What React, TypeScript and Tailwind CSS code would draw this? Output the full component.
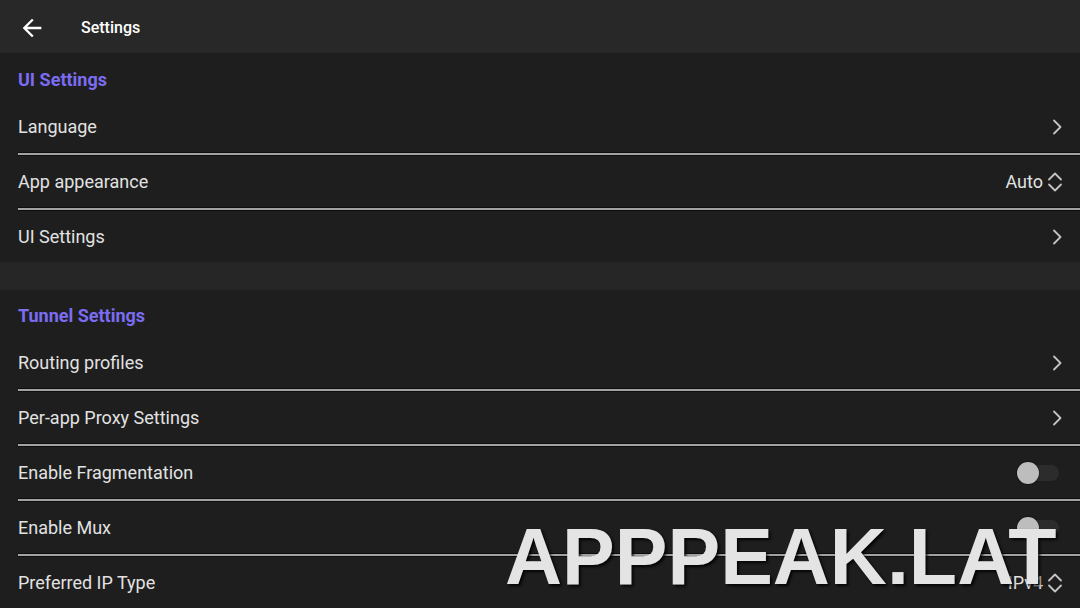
import React from "react";

const font = { fontFamily: "Roboto, 'Noto Sans', sans-serif" };

function ChevronRight() {
  return (
    <svg width="12" height="16" viewBox="0 0 12 16" className="block">
      <polyline points="3,1.5 9.5,8 3,14.5" fill="none" stroke="#c4c4c4" strokeWidth="1.8" strokeLinecap="round" strokeLinejoin="round" />
    </svg>
  );
}

function UpDown() {
  return (
    <svg width="16" height="22" viewBox="0 0 16 22" className="block">
      <polyline points="2,8.5 8,2.5 14,8.5" fill="none" stroke="#c4c4c4" strokeWidth="1.8" strokeLinecap="round" strokeLinejoin="round" />
      <polyline points="2,13.5 8,19.5 14,13.5" fill="none" stroke="#c4c4c4" strokeWidth="1.8" strokeLinecap="round" strokeLinejoin="round" />
    </svg>
  );
}

function Toggle() {
  return (
    <div className="relative w-[42px] h-[22px] flex items-center">
      <div className="absolute left-[12px] right-0 h-[16px] rounded-full bg-[#2c2c2c]" />
      <div className="absolute left-0 w-[22px] h-[22px] rounded-full bg-[#bdbdbd] shadow-[0_0_2px_rgba(0,0,0,0.9)]" />
    </div>
  );
}

function Divider() {
  return <div className="ml-[18px] h-[4px] border-y border-[#0e0e0e] bg-[#a2a2a2]" />;
}

type Row = { label: string; kind: "link" | "select" | "toggle"; value?: string };

function SettingRow({ row }: { row: Row }) {
  return (
    <div className="h-[51px] flex items-center justify-between pl-[18px] pr-[17px]">
      <span className="text-[18px] text-[#e2e2e2]">{row.label}</span>
      {row.kind === "link" && <ChevronRight />}
      {row.kind === "select" && (
        <div className="flex items-center gap-[4px]">
          <span className="text-[18px] text-[#e2e2e2]">{row.value}</span>
          <UpDown />
        </div>
      )}
      {row.kind === "toggle" && (
        <div className="pr-[4px]">
          <Toggle />
        </div>
      )}
    </div>
  );
}

function Section({ title, rows, compact }: { title: string; rows: Row[]; compact?: boolean }) {
  return (
    <section className="bg-[#1e1e1e]">
      <div className={compact ? "h-[47px] pl-[18px] pt-[14px]" : "h-[48px] pl-[18px] pt-[15px]"}>
        <h2 className="text-[18px] leading-[24px] font-bold text-[#7b6cf2]">{title}</h2>
      </div>
      {rows.map((r, i) => (
        <React.Fragment key={r.label}>
          {i > 0 && <Divider />}
          <SettingRow row={r} />
        </React.Fragment>
      ))}
    </section>
  );
}

export default function App() {
  const ui: Row[] = [
    { label: "Language", kind: "link" },
    { label: "App appearance", kind: "select", value: "Auto" },
    { label: "UI Settings", kind: "link" },
  ];
  const tunnel: Row[] = [
    { label: "Routing profiles", kind: "link" },
    { label: "Per-app Proxy Settings", kind: "link" },
    { label: "Enable Fragmentation", kind: "toggle" },
    { label: "Enable Mux", kind: "toggle" },
    { label: "Preferred IP Type", kind: "select", value: "IPv4" },
  ];
  return (
    <div className="relative w-[1080px] h-[608px] overflow-hidden bg-[#262626]" style={font}>
      <header className="h-[53px] bg-[#282828] flex items-center pt-[2px]">
        <div className="w-[64px] flex justify-center">
          <svg width="28" height="28" viewBox="0 0 24 24" className="block -ml-[1px]">
            <path d="M20 11H7.830l5.59-5.59L12 4l-8 8 8 8 1.41-1.41L7.83 13H20v-2z" fill="#ffffff" />
          </svg>
        </div>
        <h1 className="ml-[17px] text-[16px] font-medium text-white">Settings</h1>
      </header>
      <Section title="UI Settings" rows={ui} />
      <div className="h-[28px]" />
      <Section title="Tunnel Settings" rows={tunnel} compact />
      <div
        className="absolute left-[505px] top-[517px] text-[79px] leading-none font-bold text-[#e4e4e4] [text-shadow:2px_2px_3px_rgba(0,0,0,0.85)]"
        style={{ fontFamily: "'Liberation Sans', Arial, sans-serif" }}
      >
        APPPEAK.LAT
      </div>
    </div>
  );
}
